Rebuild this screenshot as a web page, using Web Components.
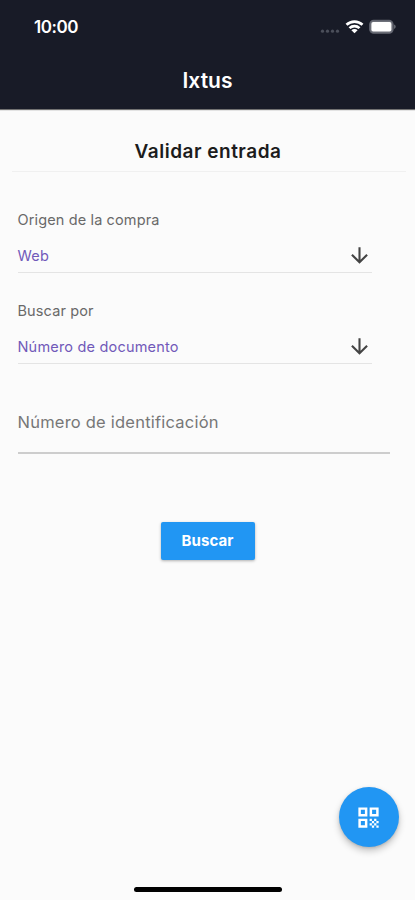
<!DOCTYPE html>
<html lang="es">
<head>
<meta charset="utf-8">
<title>Ixtus</title>
<style>
html,body{margin:0;height:100%;background:#fbfbfb}
body{font-family:Inter,Roboto,"Liberation Sans",sans-serif;overflow:hidden}
</style>
</head>
<body>
<ix-app></ix-app>
<script>
const define = (name, html) => customElements.define(name, class extends HTMLElement {
  constructor() {
    super();
    const t = document.createElement('template');
    t.innerHTML = html;
    this.attachShadow({mode: 'open'}).append(t.content.cloneNode(true));
  }
});

define('ix-status-bar', `<style>
:host{display:flex;height:54px;align-items:center;justify-content:space-between;padding:0 19px 0 34px;box-sizing:border-box;color:#fff}
.time{font-size:17px;line-height:20px;font-weight:600;letter-spacing:-.45px}
svg{display:block}
</style>
<span class="time">10:00</span>
<svg width="80" height="20" viewBox="0 0 80 20">
<g fill="#4b4f5a"><circle cx="6.5" cy="14.2" r="1.6"/><circle cx="11.5" cy="14.2" r="1.6"/><circle cx="16.5" cy="14.2" r="1.6"/><circle cx="21.5" cy="14.2" r="1.6"/></g>
<g transform="translate(38.5 16.3)"><path fill="#fff" d="M0 0L-3.1-3.1A4.4 4.4 0 0 1 3.1-3.1Z"/>
<g fill="none" stroke="#fff" stroke-width="2.7"><path d="M-5-5.2A7.2 7.2 0 0 1 5-5.2"/><path d="M-8-8.5A11.7 11.7 0 0 1 8-8.5"/></g></g>
<rect x="53.7" y="3.4" width="23.4" height="12.8" rx="4" fill="#6e717a" stroke="#60636e" stroke-width="1.1"/>
<rect x="55.4" y="5.1" width="20" height="9.5" rx="1.8" fill="#fff"/>
<path d="M78.2 7.6a2.4 2.4 0 0 1 0 4.4z" fill="#747780"/>
</svg>`);

define('ix-app-bar', `<style>
:host{display:flex;height:55px;box-sizing:border-box;align-items:center;justify-content:center;color:#fff;font-size:21px;font-weight:600;line-height:26px;padding-bottom:1px}
</style><slot></slot>`);

define('ix-heading', `<style>
:host{display:flex;margin:0 9px 0 12px;height:63px;box-sizing:border-box;padding:31px 2px 0 0;justify-content:center;border-bottom:1px solid #f0f0f0;color:#1c1c1c;font-size:19px;line-height:24px;font-weight:600;letter-spacing:.5px}
</style><slot></slot>`);

define('ix-select', `<style>
:host{display:block;margin:0 43px 0 17.5px;height:72px;box-sizing:border-box;border-bottom:1px solid #e4e4e4}
.label{font-size:14.5px;line-height:20px;padding-top:9px;color:#696969;letter-spacing:.13px}
.row{display:flex;align-items:center;justify-content:space-between;height:24px;margin-top:13px}
.value{font-size:14.5px;color:#7159b9;letter-spacing:.19px}
svg{display:block;fill:#444}
</style>
<div class="label"><slot name="label"></slot></div>
<div class="row"><span class="value"><slot></slot></span>
<svg width="25" height="25" viewBox="0 0 24 24"><path d="M20 12l-1.41-1.41L13 16.17V4h-2v12.17l-5.58-5.59L4 12l8 8 8-8z"/></svg></div>`);

define('ix-field', `<style>
:host{display:block;margin:0 25px 0 17.5px;height:44px;box-sizing:border-box;border-bottom:2px solid #cdcdcd;color:#777;font-size:16.5px;line-height:24px;letter-spacing:.22px}
</style><slot></slot>`);

define('ix-button', `<style>
:host{display:block}
button{display:block;width:94px;height:38px;border:0;padding:0;margin:0 auto;border-radius:2px;background:#2196f3;color:#fff;font:700 15px/20px Inter,Roboto,sans-serif;letter-spacing:.1px;box-shadow:0 1px 3px rgba(0,0,0,.3)}
</style><button><slot></slot></button>`);

define('ix-fab', `<style>
:host{display:flex;width:60px;height:60px;border-radius:50%;background:#2196f3;align-items:center;justify-content:center;box-shadow:0 4px 7px rgba(0,0,0,.22),0 1px 3px rgba(0,0,0,.13)}
</style>
<svg width="27" height="27" viewBox="0 0 24 24" fill="#fff"><path fill-rule="evenodd" d="M3 11h8V3H3zm2.2-5.8h3.6v3.6H5.2zM3 21h8v-8H3zm2.2-5.8h3.6v3.6H5.2zM13 3v8h8V3zm5.8 5.8h-3.6V5.2h3.6z"/><path d="M19 19h2v2h-2zM13 13h2v2h-2zM15 15h2v2h-2zM13 17h2v2h-2zM15 19h2v2h-2zM17 17h2v2h-2zM17 13h2v2h-2zM19 15h2v2h-2z"/></svg>`);

define('ix-app', `<style>
:host{display:flex;flex-direction:column;height:900px;width:415px;background:#fbfbfb;position:relative}
header{background:#181b27;height:109px;box-shadow:0 1px 1px rgba(0,0,0,.55);flex:none}
main{display:flex;flex-direction:column;flex:1}
.one{margin-top:29px}.two{margin-top:19px}
ix-field{margin-top:46px}ix-button{margin-top:68px}
ix-fab{position:absolute;left:338.5px;top:787px}
.home{width:148px;height:5px;border-radius:3px;background:#000;margin:auto auto 8px}
</style>
<header><ix-status-bar></ix-status-bar><ix-app-bar>Ixtus</ix-app-bar></header>
<main>
<ix-heading>Validar entrada</ix-heading>
<ix-select class="one"><span slot="label">Origen de la compra</span>Web</ix-select>
<ix-select class="two"><span slot="label">Buscar por</span>Número de documento</ix-select>
<ix-field>Número de identificación</ix-field>
<ix-button>Buscar</ix-button>
<div class="home"></div>
</main>
<ix-fab></ix-fab>`);
</script>
</body>
</html>
